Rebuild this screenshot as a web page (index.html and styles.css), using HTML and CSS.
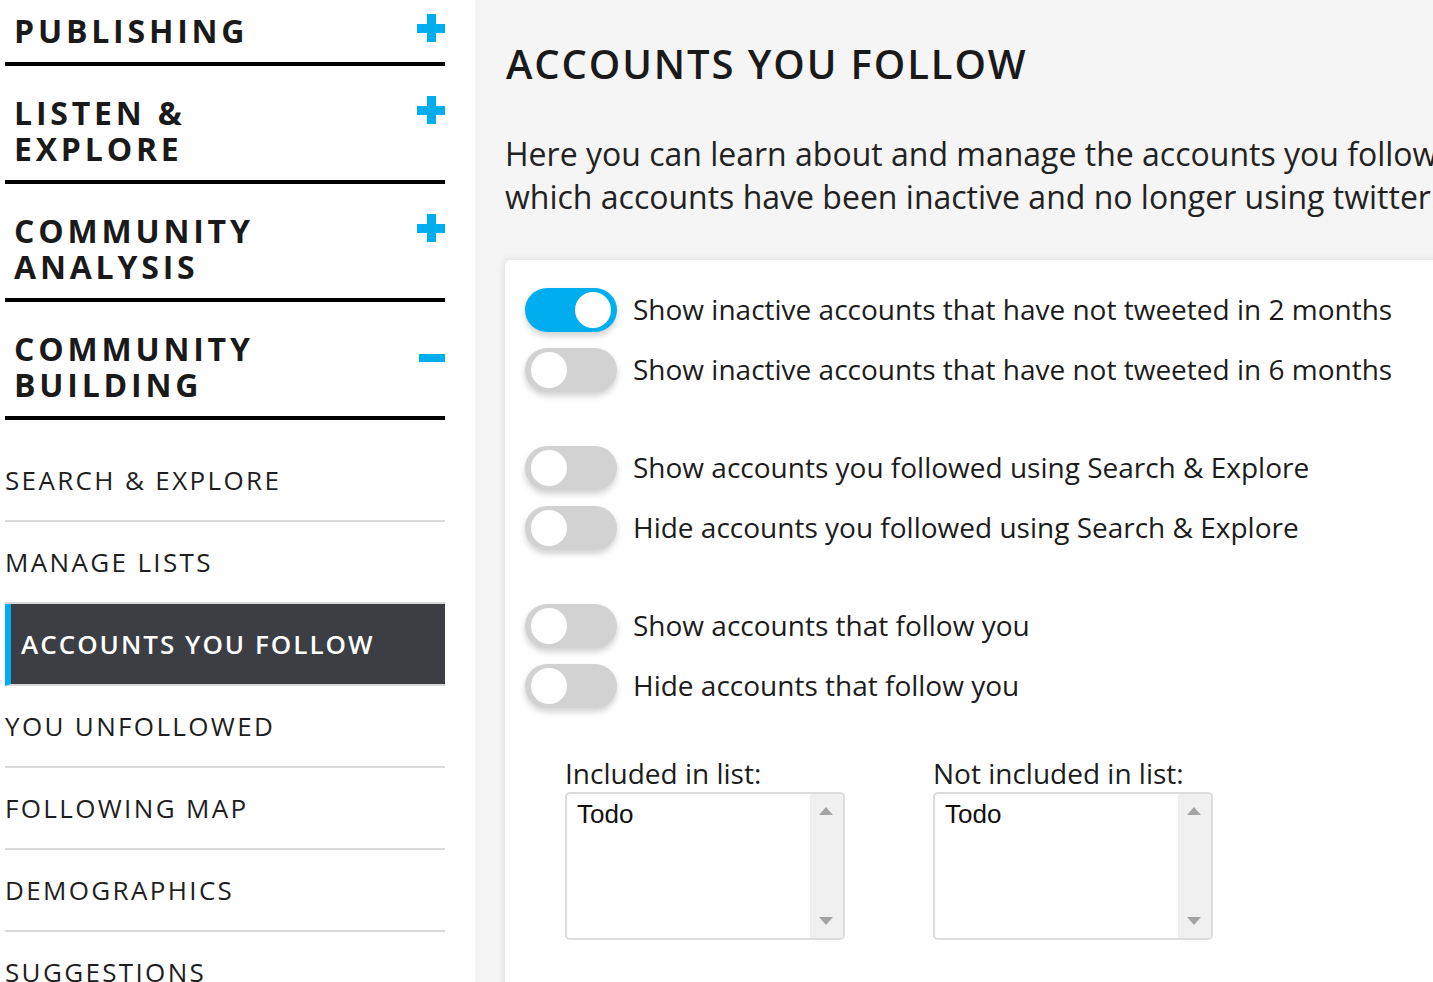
FILE: index.html
```html
<!DOCTYPE html>
<html lang="en">
<head>
<meta charset="utf-8">
<title>Accounts you follow</title>
<link rel="stylesheet" href="styles.css">
</head>
<body>
<div class="page">
  <aside class="sidebar">
    <div class="section first">
      <h2 class="sec-title">PUBLISHING</h2>
      <span class="icon plus"></span>
    </div>
    <div class="section">
      <h2 class="sec-title">LISTEN &amp; EXPLORE</h2>
      <span class="icon plus"></span>
    </div>
    <div class="section">
      <h2 class="sec-title">COMMUNITY ANALYSIS</h2>
      <span class="icon plus"></span>
    </div>
    <div class="section">
      <h2 class="sec-title">COMMUNITY BUILDING</h2>
      <span class="icon minus"></span>
    </div>
    <ul class="subnav">
      <li class="sub-item">SEARCH &amp; EXPLORE</li>
      <li class="sub-item">MANAGE LISTS</li>
      <li class="sub-item active">ACCOUNTS YOU FOLLOW</li>
      <li class="sub-item">YOU UNFOLLOWED</li>
      <li class="sub-item">FOLLOWING MAP</li>
      <li class="sub-item">DEMOGRAPHICS</li>
      <li class="sub-item">SUGGESTIONS</li>
    </ul>
  </aside>
  <main class="main">
    <h1 class="title">ACCOUNTS YOU FOLLOW</h1>
    <p class="intro">
      <span class="intro-line">Here you can learn about and manage the accounts you follow. Find out</span>
      <span class="intro-line">which accounts have been inactive and no longer using twitter.</span>
    </p>
    <section class="card">
      <div class="group">
        <div class="row"><span class="toggle on"><span class="knob"></span></span><span class="row-label">Show inactive accounts that have not tweeted in 2 months</span></div>
        <div class="row"><span class="toggle"><span class="knob"></span></span><span class="row-label">Show inactive accounts that have not tweeted in 6 months</span></div>
      </div>
      <div class="group">
        <div class="row"><span class="toggle"><span class="knob"></span></span><span class="row-label">Show accounts you followed using Search &amp; Explore</span></div>
        <div class="row"><span class="toggle"><span class="knob"></span></span><span class="row-label">Hide accounts you followed using Search &amp; Explore</span></div>
      </div>
      <div class="group">
        <div class="row"><span class="toggle"><span class="knob"></span></span><span class="row-label">Show accounts that follow you</span></div>
        <div class="row"><span class="toggle"><span class="knob"></span></span><span class="row-label">Hide accounts that follow you</span></div>
      </div>
      <div class="lists">
        <div class="list-col">
          <div class="list-label">Included in list:</div>
          <div class="listbox">
            <div class="list-items"><div class="list-item">Todo</div></div>
            <div class="scrollbar"><span class="arrow up"></span><span class="arrow down"></span></div>
          </div>
        </div>
        <div class="list-col">
          <div class="list-label">Not included in list:</div>
          <div class="listbox">
            <div class="list-items"><div class="list-item">Todo</div></div>
            <div class="scrollbar"><span class="arrow up"></span><span class="arrow down"></span></div>
          </div>
        </div>
      </div>
    </section>
  </main>
</div>
</body>
</html>
```
FILE: styles.css
```css
* { box-sizing: border-box; }
html, body {
  margin: 0;
  padding: 0;
  height: 982px;
  overflow: hidden;
  background: #f5f5f5;
  font-family: "Open Sans", "Liberation Sans", sans-serif;
  color: #1c1c1c;
}
.page {
  display: flex;
  height: 982px;
  width: 1433px;
  overflow: hidden;
}
.sidebar {
  flex: 0 0 475px;
  background: #ffffff;
  padding: 0 30px 0 5px;
  overflow: hidden;
}
.section {
  display: flex;
  justify-content: space-between;
  align-items: flex-start;
  padding: 29px 0 13px 9px;
  border-bottom: 4px solid #000;
}
.section.first { padding-top: 13px; }
.sec-title {
  margin: 0;
  max-width: 320px;
  font-size: 32px;
  line-height: 36px;
  font-weight: 700;
  letter-spacing: 3.8px;
  color: #1a1a1a;
}
.icon {
  position: relative;
  flex: 0 0 28px;
  width: 28px;
  height: 28px;
  margin-top: 1px;
}
.plus::before, .plus::after, .minus::before {
  content: "";
  position: absolute;
  background: #00aeef;
}
.plus::before { left: 0; top: 9.5px; width: 28px; height: 9px; }
.plus::after { left: 9.5px; top: 0; width: 9px; height: 28px; }
.minus::before { left: 2px; top: 22px; width: 26px; height: 8px; }
.subnav {
  list-style: none;
  margin: 20px 0 0;
  padding: 0;
}
.sub-item {
  height: 82px;
  display: flex;
  align-items: center;
  padding-bottom: 0;
  border-bottom: 2px solid #d9d9d9;
  font-size: 26px;
  letter-spacing: 2.35px;
  color: #1e1e1e;
  white-space: nowrap;
}
.sub-item.active {
  background: #3c3e43;
  border-left: 6px solid #00aeef;
  padding-left: 10px;
  color: #ffffff;
  font-weight: 600;
  letter-spacing: 2px;
}
.main {
  flex: 1 1 auto;
  min-width: 0;
  padding: 40px 0 0 31px;
  overflow: hidden;
}
.title {
  margin: 0;
  font-size: 40px;
  line-height: 48px;
  font-weight: 600;
  letter-spacing: 1.9px;
  color: #1a1a1a;
}
.intro {
  margin: 44px 0 0 -1px;
  font-size: 32px;
  line-height: 43px;
  color: #222;
}
.intro-line {
  display: block;
  white-space: nowrap;
}
.card {
  margin: 42px 0 0 -1px;
  width: 1100px;
  height: 900px;
  background: #ffffff;
  border-radius: 6px 0 0 0;
  box-shadow: 0 0 8px rgba(0, 0, 0, 0.12);
  padding: 28px 20px;
}
.group {
  display: flex;
  flex-direction: column;
  gap: 16px;
  margin-bottom: 54px;
}
.row {
  display: flex;
  align-items: center;
  gap: 16px;
  height: 44px;
}
.toggle {
  position: relative;
  flex: 0 0 92px;
  width: 92px;
  height: 44px;
  border-radius: 22px;
  background: #d2d2d2;
  box-shadow: 0 4px 6px rgba(0, 0, 0, 0.18);
}
.toggle.on {
  background: #00aeef;
}
.knob {
  position: absolute;
  top: 4px;
  left: 6px;
  width: 36px;
  height: 36px;
  border-radius: 50%;
  background: #ffffff;
}
.toggle.on .knob { left: 50px; }
.row-label {
  font-size: 28px;
  line-height: 38px;
  margin-top: -2px;
  color: #1c1c1c;
  white-space: nowrap;
}
.lists {
  display: flex;
  gap: 89px;
  margin-top: -8px;
  padding-left: 41px;
}
.list-col {
  display: flex;
  flex-direction: column;
  width: 279px;
}
.list-label {
  font-size: 28px;
  line-height: 38px;
  margin-left: -1px;
  color: #1c1c1c;
  white-space: nowrap;
}
.listbox {
  display: flex;
  height: 148px;
  margin-left: -1px;
  border: 2px solid #dcdcdc;
  border-radius: 5px;
  overflow: hidden;
  background: #ffffff;
}
.list-items {
  flex: 1 1 auto;
  padding: 4px 10px;
}
.list-item {
  font-family: "Liberation Sans", Arial, sans-serif;
  font-size: 26px;
  line-height: 32px;
  color: #111;
}
.scrollbar {
  position: relative;
  flex: 0 0 33px;
  background: #f0f0f0;
}
.arrow {
  position: absolute;
  left: 9px;
  width: 0;
  height: 0;
  border-left: 7px solid transparent;
  border-right: 7px solid transparent;
}
.arrow.up { top: 13px; border-bottom: 8px solid #a3a3a3; }
.arrow.down { bottom: 13px; border-top: 8px solid #a3a3a3; }
```
